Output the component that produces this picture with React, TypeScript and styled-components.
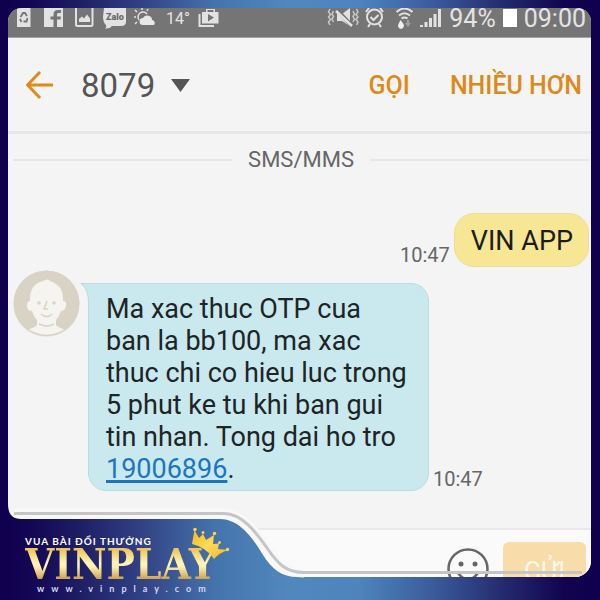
import React from "react";
import styled, { createGlobalStyle } from "styled-components";

const GlobalStyle = createGlobalStyle`
  *, *::before, *::after { box-sizing: border-box; }
  body { margin: 0; font-family: Roboto, "Liberation Sans", sans-serif; }
  button, input { font: inherit; border: 0; padding: 0; margin: 0; background: none; }
  svg { display: block; flex: none; }
`;

const stops: [number, string][] = [
  [0, "#10004d"],
  [5, "#130653"],
  [14, "#1f2066"],
  [25, "#344789"],
  [36, "#4574ac"],
  [48, "#5088be"],
  [60, "#4d84bb"],
  [72, "#3a5c9a"],
  [84, "#242a6e"],
  [94, "#11044f"],
  [100, "#10004d"],
];

const Frame = styled.main`
  position: relative;
  display: flex;
  min-height: 100vh;
  padding: 8px 9px 23px 8px;
  background: linear-gradient(90deg, ${stops.map(([p, c]) => `${c} ${p}%`).join(", ")});
`;

const Screen = styled.div`
  flex: 1;
  min-width: 0;
  display: flex;
  flex-direction: column;
  overflow: hidden;
  border-radius: 14px 14px 16px 16px;
  background: #f4f4f4;
`;

const StatusBar = styled.div`
  display: flex;
  justify-content: space-between;
  height: 30px;
  padding: 0 5px 0 8px;
  background: #757575;
  border-bottom: 1px solid #a4a4a4;
  color: #e4e4e4;
`;

const StatusGroup = styled.div<{ $gap: number }>`
  display: flex;
  align-items: flex-start;
  gap: ${(p) => p.$gap}px;
`;

const StatusText = styled.span<{ $size: number }>`
  font-size: ${(p) => p.$size}px;
  line-height: 21px;
`;

const Toolbar = styled.header`
  display: flex;
  align-items: center;
  height: 96px;
  padding: 2px 9px 0 18px;
  border-bottom: 3px solid #e6e6e6;
`;

const IconButton = styled.button`
  display: flex;
  color: #e08a17;
`;

const Contact = styled.button`
  display: flex;
  align-items: center;
  gap: 16px;
  margin: 0 auto 0 26px;
  color: #555;
  font-size: 33px;
  line-height: 40px;
`;

const Actions = styled.div`
  display: flex;
  gap: 40px;
`;

const Action = styled.button`
  color: #dd8a1c;
  font-size: 25px;
  font-weight: 500;
  line-height: 32px;
  white-space: nowrap;
`;

const Thread = styled.section`
  flex: 1;
  padding: 10px 2px 0 5px;
`;

const Divider = styled.div`
  display: flex;
  align-items: center;
  gap: 16px;
  margin-bottom: 37px;
  color: #666;
  font-size: 22px;
  line-height: 32px;

  &::before, &::after {
    content: "";
    flex: 1;
    height: 2px;
    background: #e6e6e6;
  }
`;

const MessageRow = styled.div<{ $own?: boolean }>`
  display: flex;
  align-items: flex-end;
  justify-content: ${(p) => (p.$own ? "flex-end" : "flex-start")};
  gap: 4px;
  margin-bottom: 3px;
`;

const OwnBubble = styled.p`
  margin: 0;
  padding: 11px 15px 9px 16px;
  border: 1px solid #ecdc95;
  border-radius: 20px;
  background: #f7e794;
  color: #1c1c1c;
  font-size: 27px;
  line-height: 32px;
`;

const Avatar = styled.div`
  align-self: flex-start;
  margin-right: 4px;
`;

const Bubble = styled.p`
  position: relative;
  width: 341px;
  margin: 13px 0 0;
  padding: 9px 16px 5px 17px;
  border: 1px solid #b9dce0;
  border-radius: 0 18px 18px 18px;
  background: #c9e9ee;
  color: #1e2426;
  font-size: 27px;
  line-height: 32px;
`;

const Tail = styled.svg`
  position: absolute;
  left: -9px;
  top: -1px;
`;

const PhoneLink = styled.a`
  color: #1b75c4;
  text-decoration: underline;
  text-decoration-thickness: 3px;
  text-underline-offset: 2px;
  text-decoration-skip-ink: none;
`;

const Time = styled.time`
  color: #666;
  font-size: 20px;
  line-height: 24px;
`;

const Composer = styled.form`
  display: flex;
  align-items: flex-start;
  height: 49px;
  padding: 12px 5px 0 0;
  border-top: 2px solid #e9e9e9;
  background: #fafafa;
`;

const Draft = styled.input`
  flex: 1;
  min-width: 0;
  height: 32px;
  padding-left: 300px;
  outline: none;
`;

const Smile = styled.button`
  display: flex;
  margin: 6px 14px 0 0;
`;

const Send = styled.button`
  width: 83px;
  height: 60px;
  border-radius: 6px;
  background: #f8dcaa;
  color: #fff8e8;
  font-size: 25px;
  line-height: 60px;
`;

const Ribbon = styled.svg`
  position: absolute;
  left: 0;
  bottom: 0;
  width: 100%;
  height: 100px;
  pointer-events: none;
`;

const Brand = styled.div`
  position: absolute;
  left: 25px;
  bottom: 6px;
  width: 210px;
  color: #fff;
`;

const Tagline = styled.div`
  font: 700 10px/12px Lato, sans-serif;
  letter-spacing: 1px;
  white-space: nowrap;
`;

const Wordmark = styled.div`
  font-family: "DejaVu Serif Condensed", "DejaVu Serif", serif;
  font-size: 42px;
  font-weight: 700;
  line-height: 36px;
  color: transparent;
  background: linear-gradient(#f0c65c 8%, #fff6b8 45%, #fff0b0 55%, #c99a48 92%);
  background-clip: text;
`;

const Site = styled.div`
  padding-left: 12px;
  font: 700 9px/11px Lato, sans-serif;
  color: #d5dbec;
  letter-spacing: 7px;
  white-space: nowrap;
`;

const Crown = styled.svg`
  position: absolute;
  left: 165px;
  top: -8px;
`;

const LeftIcons = () => (
  <svg width="142" height="22" viewBox="16 8 142 22" aria-hidden="true">
    <path fill="#e2e2e2" d="M17 8H30.500V27H17z" />
    <path d="M20.500 17l2.500-4h2l2 3M27.500 18l-1 3.500h-3M21.500 22l-1.500-3" fill="none" stroke="#757575" strokeWidth="1.800" />
    <path fill="#e2e2e2" d="M44 8H63V27H44z" />
    <path fill="#757575" d="M53.500 27V19.500H50.500V16.500H53.500V14.500C53.500 11.500 55 10 58 10H61V13H59C57.500 13 57 13.500 57 15V16.500H61L60.500 19.500H57V27z" />
    <path fill="none" stroke="#e2e2e2" strokeWidth="2" d="M76 7V24.500Q76 26 77.500 26H91Q92.500 26 92.500 24.500V7" />
    <path fill="#e2e2e2" d="M79 22V19L82 16.500L84 18.500L87 14.500L90 18.500V22z" />
    <path fill="#e2e2e2" d="M104 8H126V22Q126 26 121 26H112Q110 29 105 28.500Q107 27 106 25Q103 22 103 17z" />
    <text x="106" y="20" fontFamily="Roboto, sans-serif" fontSize="9" fontWeight="900" fill="#686868">Zalo</text>
    <g stroke="#e2e2e2" strokeWidth="1.500" fill="none">
      <path d="M139 20A5 5 0 0 1 147 14M134 17h2M135 10l2 2M142 8v2M148 9l-1 2M135 24l2-2" />
    </g>
    <path fill="#e8e8e8" d="M143 25a3.500 3.500 0 0 1 0-7 5 5 0 0 1 8-1q1 1 1 3a3 3 0 0 1 2 5z" />
  </svg>
);

const StoreIcon = () => (
  <svg width="21" height="22" viewBox="194 8 21 22" aria-hidden="true">
    <path fill="none" stroke="#e2e2e2" strokeWidth="2" d="M195.500 14V26H210" />
    <path fill="#e2e2e2" d="M198 12H202V9H211V12H214.500V23.500H198z" />
    <path fill="#757575" d="M203.500 10H209.500V12H203.500zM204 14L210 17.500L204 21.500z" />
  </svg>
);

const SignalIcons = () => (
  <svg width="115" height="22" viewBox="328 8 115 22" aria-hidden="true">
    <g fill="none" stroke="#c9c9c9" strokeWidth="1.500">
      <path d="M331 9l-1.500 3 2 2.500-2 2.500 2 2.500-2 2.500 1.500 3M334.500 11l-1.500 3 1.500 2.500-1.500 2.500 1.500 3M357.500 9l1.500 3-2 2.500 2 2.500-2 2.500 2 2.500-1.500 3M354 11l1.500 3-1.500 2.500 1.500 2.500-1.500 3" />
    </g>
    <path fill="#e2e2e2" d="M338 14H343L351 8V26L343 21H338z" />
    <path d="M336 8L354 27" stroke="#757575" strokeWidth="4" />
    <path d="M337 11L353 26" stroke="#e2e2e2" strokeWidth="2.500" />
    <g fill="none" stroke="#e2e2e2" strokeWidth="2">
      <circle cx="375.500" cy="17" r="7.500" />
      <path d="M371.500 17l3 3 5-5M367 12l3-4M384 12l-3-4M371 24l-2 3M380 24l2 3" />
      <path d="M397.500 12Q405.500 5 413.500 12M400 15.500Q405.500 11 411 15.500M402.500 18.500Q405.500 16.500 408.500 18.500" />
    </g>
    <path fill="#f0f0f0" d="M401.500 20l3 4a3 3 0 1 1-5 0z" />
    <path fill="#a0a0a0" d="M408 20h2v3h2l-3 4-3-4h2z" />
    <path fill="#e2e2e2" d="M421 25h3v2h-3zM425.500 22h3v5h-3zM430 18h3v9h-3zM434.500 14h3v13h-3zM439 9h3v18h-3z" />
  </svg>
);

const App = () => (
  <>
    <GlobalStyle />
    <Frame>
      <Screen>
        <StatusBar>
          <StatusGroup $gap={8}>
            <LeftIcons />
            <StatusText $size={16}>14°</StatusText>
            <StoreIcon />
          </StatusGroup>
          <StatusGroup $gap={7}>
            <SignalIcons />
            <StatusText $size={25}>94%</StatusText>
            <svg width="14" height="22" viewBox="0 0 14 22" aria-hidden="true">
              <path fill="#fff" d="M0 1H14V19H0z" />
            </svg>
            <StatusText $size={25}>09:00</StatusText>
          </StatusGroup>
        </StatusBar>

        <Toolbar>
          <IconButton aria-label="Quay lại">
            <svg width="29" height="30" viewBox="0 0 29 30" fill="none" stroke="currentColor" strokeWidth="3">
              <path d="M27 14H2M14 1L1.500 14L14 27" />
            </svg>
          </IconButton>
          <Contact>
            8079
            <svg width="20" height="14" viewBox="0 0 20 14" aria-hidden="true">
              <path d="M0 0H19L9.500 13z" fill="#555" />
            </svg>
          </Contact>
          <Actions>
            <Action>GỌI</Action>
            <Action>NHIỀU HƠN</Action>
          </Actions>
        </Toolbar>

        <Thread>
          <Divider>SMS/MMS</Divider>
          <MessageRow $own>
            <Time>10:47</Time>
            <OwnBubble>VIN APP</OwnBubble>
          </MessageRow>
          <MessageRow>
            <Avatar>
              <svg width="67" height="67" viewBox="0 0 67 67" aria-hidden="true">
                <defs>
                  <clipPath id="avatarClip"><circle cx="33.500" cy="33.500" r="33" /></clipPath>
                </defs>
                <circle cx="33.500" cy="33.500" r="33" fill="#d9d3c5" />
                <g clipPath="url(#avatarClip)">
                  <path fill="#f5f4f0" d="M17 29Q17 14 30 11Q35 8 37 11Q50 15 50 29V31Q54 31 53 36Q52 41 48 41Q46 47 43 50V55Q46 58 53 60L60 67H8L14 60Q21 58 24 55V50Q20 46 19 41Q14 41 14 36Q14 31 17 31z" />
                </g>
                <g fill="none" stroke="#d9d3c5" strokeWidth="1.500">
                  <path d="M34 31L31 39H35M28 44Q34 49 39 44M26 54Q34 58 41 54" />
                  <circle cx="33.500" cy="33.500" r="32" />
                </g>
                <g fill="#d9d3c5"><circle cx="26" cy="33" r="1.700" /><circle cx="41" cy="33" r="1.700" /></g>
              </svg>
            </Avatar>
            <Bubble>
              <Tail width="12" height="20" viewBox="0 0 12 20" aria-hidden="true">
                <path d="M0 0.500H12V20H8.500V16Q8 6 0 0.500z" fill="#c9e9ee" />
                <path d="M12 0.500H1Q8.500 6 8.500 20" fill="none" stroke="#b9dce0" />
              </Tail>
              Ma xac thuc OTP cua ban la bb100, ma xac thuc chi co hieu luc trong 5 phut ke tu khi ban gui tin nhan. Tong
              dai ho tro <PhoneLink href="tel:19006896">19006896</PhoneLink>.
            </Bubble>
            <Time>10:47</Time>
          </MessageRow>
        </Thread>

        <Composer onSubmit={(e) => e.preventDefault()}>
          <Draft aria-label="Tin nhắn" />
          <Smile type="button" aria-label="Biểu tượng cảm xúc">
            <svg width="42" height="42" viewBox="0 0 42 42" fill="none" stroke="#666" strokeWidth="2.500">
              <circle cx="21" cy="21" r="19.500" />
              <path d="M11 25Q21 38 31 25" />
              <circle cx="14" cy="16" r="2.500" fill="#666" stroke="none" />
              <circle cx="28" cy="16" r="2.500" fill="#666" stroke="none" />
            </svg>
          </Smile>
          <Send type="submit">GỬI</Send>
        </Composer>
      </Screen>

      <Ribbon aria-hidden="true">
        <defs>
          <linearGradient id="ribbonFill" gradientUnits="userSpaceOnUse" x1="0" x2="100%" y1="0" y2="0">
            {stops.map(([p, c]) => (
              <stop key={p} offset={`${p}%`} stopColor={c} />
            ))}
          </linearGradient>
        </defs>
        <path
          d="M14 13.500H222C242 13.500 256 33 266 47C277 63 286 72.500 304 72.500"
          fill="none"
          stroke="#f8f8f8"
          strokeWidth="10"
        />
        <path
          d="M0 4H8Q8 19 21 19H220C240 19 254 40 263 55C272 69 281 77 298 77V100H0z"
          fill="url(#ribbonFill)"
        />
        <path
          d="M14 13.500H224C243 13.500 257 34 267 48C278 64 286 72.500 304 72.500"
          fill="none"
          stroke="#c5c5c5"
          strokeWidth="3"
        />
        <line x1="304" x2="97%" y1="72.500" y2="72.500" stroke="#c5c5c5" strokeWidth="3" />
      </Ribbon>

      <Brand>
        <Tagline>VUA BÀI ĐỔI THƯỞNG</Tagline>
        <Wordmark>VINPLAY</Wordmark>
        <Site>www.vinplay.com</Site>
        <Crown width="40" height="34" viewBox="190 527 40 34" aria-hidden="true">
          <defs>
            <linearGradient id="crownFill" x1="0" x2="1" y1="0" y2="1">
              <stop offset="0" stopColor="#f6b51e" />
              <stop offset="0.500" stopColor="#ffdc55" />
              <stop offset="1" stopColor="#eeb02a" />
            </linearGradient>
          </defs>
          <g fill="url(#crownFill)">
            <path d="M192 544L194.500 530L199 538L203 534L206 540L214 535L213 544L219 543.500L218 549L228 550Q219 553 214 559Q206 547 192 544z" />
            <circle cx="195" cy="529.500" r="1.800" />
            <circle cx="203" cy="532.500" r="1.500" />
            <circle cx="214.500" cy="533.500" r="1.800" />
            <circle cx="219.500" cy="542.500" r="1.500" />
            <circle cx="227.500" cy="549.500" r="1.800" />
          </g>
        </Crown>
      </Brand>
    </Frame>
  </>
);

export default App;
